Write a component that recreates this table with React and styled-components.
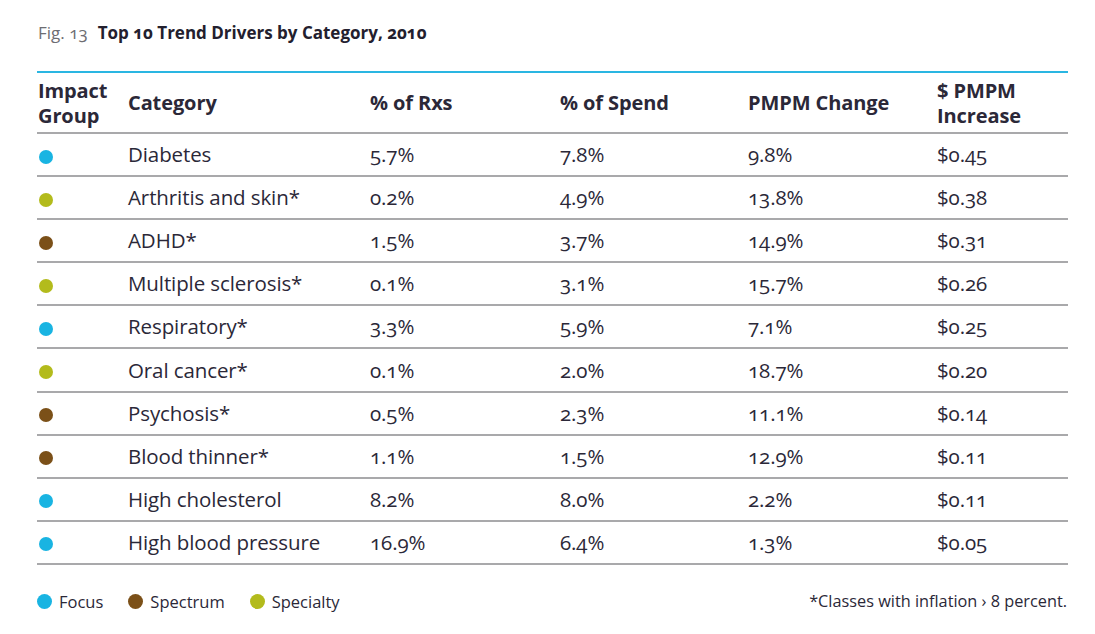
import React from 'react';
import styled, {createGlobalStyle} from 'styled-components';

const GlobalStyle = createGlobalStyle`
    body {
        margin: 0;
        background: #ffffff;
        font-family: "Open Sans", "DejaVu Sans", sans-serif;
        color: #2b2838;
    }
`;

const COLORS = {
    focus: '#19b4e2',
    spectrum: '#7b5018',
    specialty: '#b3bb1c',
};

const rows = [
    {group: 'focus', category: 'Diabetes', rxs: '5.7%', spend: '7.8%', change: '9.8%', increase: '$0.45'},
    {group: 'specialty', category: 'Arthritis and skin*', rxs: '0.2%', spend: '4.9%', change: '13.8%', increase: '$0.38'},
    {group: 'spectrum', category: 'ADHD*', rxs: '1.5%', spend: '3.7%', change: '14.9%', increase: '$0.31'},
    {group: 'specialty', category: 'Multiple sclerosis*', rxs: '0.1%', spend: '3.1%', change: '15.7%', increase: '$0.26'},
    {group: 'focus', category: 'Respiratory*', rxs: '3.3%', spend: '5.9%', change: '7.1%', increase: '$0.25'},
    {group: 'specialty', category: 'Oral cancer*', rxs: '0.1%', spend: '2.0%', change: '18.7%', increase: '$0.20'},
    {group: 'spectrum', category: 'Psychosis*', rxs: '0.5%', spend: '2.3%', change: '11.1%', increase: '$0.14'},
    {group: 'spectrum', category: 'Blood thinner*', rxs: '1.1%', spend: '1.5%', change: '12.9%', increase: '$0.11'},
    {group: 'focus', category: 'High cholesterol', rxs: '8.2%', spend: '8.0%', change: '2.2%', increase: '$0.11'},
    {group: 'focus', category: 'High blood pressure', rxs: '16.9%', spend: '6.4%', change: '1.3%', increase: '$0.05'},
];

const Figure = styled.section`
    width: 1031px;
    padding: 21px 0 0 37px;
`;

const Title = styled.h2`
    margin: 0 0 26px 1px;
    font-size: 17px;
    font-weight: 700;
    line-height: 24px;
    color: #23202e;
    font-variant-numeric: oldstyle-nums;
`;

const FigNo = styled.span`
    font-weight: 400;
    color: #6d6d72;
    margin-right: 10px;
`;

const Table = styled.div`
    border-top: 2px solid #2ab6e2;
`;

const Row = styled.div`
    display: grid;
    grid-template-columns: 91px 242px 190px 188px 189px 1fr;
    align-items: center;
    height: ${({head}) => (head ? '59px' : '41.1px')};
    border-bottom: 2px solid #a9a9ab;
    font-size: ${({head}) => (head ? '20px' : '20.5px')};
    font-weight: ${({head}) => (head ? 700 : 400)};
    line-height: 25px;
    letter-spacing: -0.1px;
    font-variant-numeric: oldstyle-nums;
`;

const Cell = styled.div`
    padding-left: ${({first}) => (first ? '1px' : '0')};
`;

const Dot = styled.span`
    display: inline-block;
    flex-shrink: 0;
    width: ${({size}) => size}px;
    height: ${({size}) => size}px;
    border-radius: 50%;
    background: ${({color}) => color};
    margin-left: ${({inset}) => (inset ? '1px' : '0')};
    vertical-align: middle;
`;

const Footer = styled.div`
    display: flex;
    justify-content: space-between;
    align-items: center;
    margin-top: 25px;
    font-size: 16.5px;
`;

const Legend = styled.div`
    display: flex;
    gap: 25px;
`;

const LegendItem = styled.div`
    display: flex;
    align-items: center;
    gap: 7px;
`;

const Note = styled.div`
    padding-right: 1px;
    font-size: 16.3px;
`;

const App = () => (
    <Figure>
        <GlobalStyle/>
        <Title>
            <FigNo>Fig. 13</FigNo>Top 10 Trend Drivers by Category, 2010
        </Title>
        <Table>
            <Row head>
                <Cell first>Impact<br/>Group</Cell>
                <Cell>Category</Cell>
                <Cell>% of Rxs</Cell>
                <Cell>% of Spend</Cell>
                <Cell>PMPM Change</Cell>
                <Cell>$ PMPM<br/>Increase</Cell>
            </Row>
            {rows.map((row, index) => (
                <Row key={index}>
                    <Cell first><Dot inset size={14} color={COLORS[row.group]}/></Cell>
                    <Cell>{row.category}</Cell>
                    <Cell>{row.rxs}</Cell>
                    <Cell>{row.spend}</Cell>
                    <Cell>{row.change}</Cell>
                    <Cell>{row.increase}</Cell>
                </Row>
            ))}
        </Table>
        <Footer>
            <Legend>
                <LegendItem><Dot size={15} color={COLORS.focus}/>Focus</LegendItem>
                <LegendItem><Dot size={15} color={COLORS.spectrum}/>Spectrum</LegendItem>
                <LegendItem><Dot size={15} color={COLORS.specialty}/>Specialty</LegendItem>
            </Legend>
            <Note>*Classes with inflation › 8 percent.</Note>
        </Footer>
    </Figure>
);

export default App;
